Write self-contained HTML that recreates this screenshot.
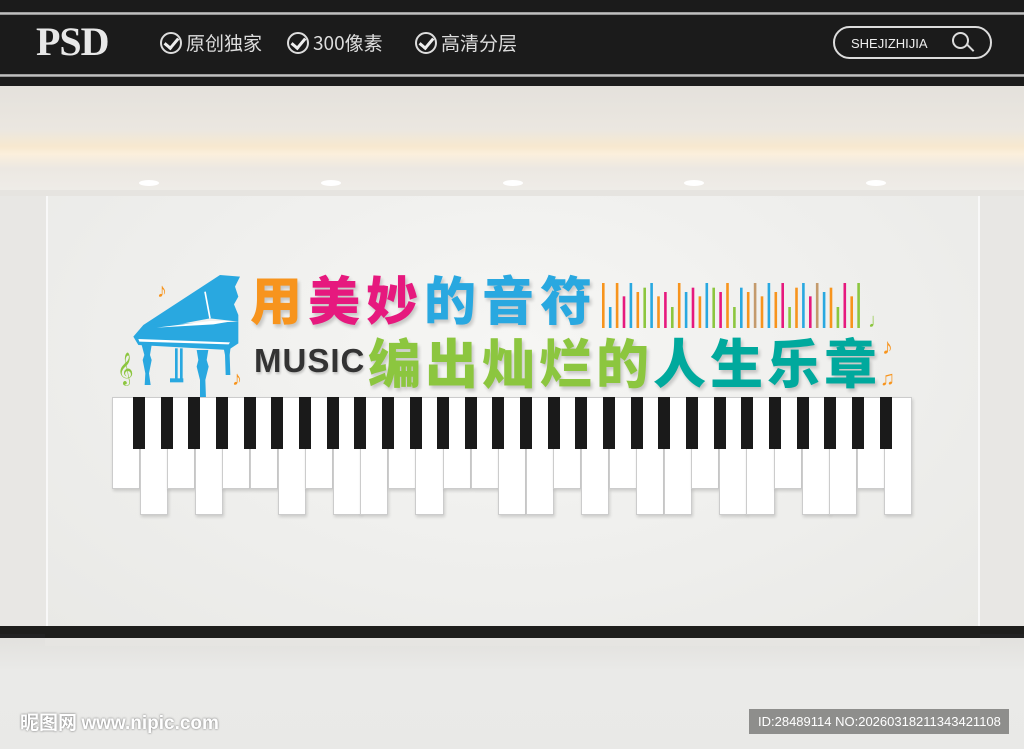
<!DOCTYPE html>
<html><head><meta charset="utf-8"><style>
*{margin:0;padding:0;box-sizing:border-box}
body{width:1024px;height:749px;overflow:hidden;position:relative;font-family:"Liberation Sans","Noto Sans CJK SC",sans-serif;background:#e9e8e5}
.abs{position:absolute}
#hdr{left:0;top:0;width:1024px;height:86px;background:#1b1b1b}
.hl{left:0;width:1024px;height:3px;background:linear-gradient(#888,#ccc,#777)}
.ck{color:#ddd;font-size:19px;top:29px;font-family:"Noto Sans CJK SC",sans-serif;white-space:nowrap}
.ck span{display:inline-block;width:22px;height:22px;border:2px solid #ddd;border-radius:50%;vertical-align:-4px;margin-right:4px;position:relative}
.ck span:after{content:"";position:absolute;left:5px;top:1px;width:6px;height:11px;border:solid #eee;border-width:0 3px 3px 0;transform:rotate(40deg)}
.t1{font-family:"Noto Sans CJK SC",sans-serif;font-weight:900;font-size:52px;line-height:1;top:272px;left:250px;letter-spacing:6px;text-shadow:2px 3px 3px rgba(0,0,0,.18)}
.t2{font-family:"Noto Sans CJK SC",sans-serif;font-weight:900;font-size:53px;line-height:1;top:335px;left:368px;letter-spacing:4px;text-shadow:2px 3px 3px rgba(0,0,0,.18)}
</style></head><body>
<div class="abs" style="left:0;top:86px;width:1024px;height:110px;background:linear-gradient(#e4e1dc 0%,#ebe7e0 40%,#f7e8cf 55%,#fbefdc 62%,#ece8e2 75%,#efede9 100%)"></div>
<div class="abs" style="left:0;top:190px;width:1024px;height:8px;background:#e6e4e0"></div>
<div class="abs" style="left:0;top:196px;width:1024px;height:435px;background:#e8e7e4"></div>
<div class="abs" style="left:46px;top:196px;width:934px;height:432px;background:radial-gradient(ellipse at 50% 35%,#f6f6f4 0%,#eeeeec 60%,#e9e9e6 100%);border-left:2px solid #f8f8f8;border-right:2px solid #f8f8f8"></div>
<div class="abs" style="left:139px;top:180px;width:20px;height:6px;border-radius:50%;background:#fff"></div>
<div class="abs" style="left:321px;top:180px;width:20px;height:6px;border-radius:50%;background:#fff"></div>
<div class="abs" style="left:503px;top:180px;width:20px;height:6px;border-radius:50%;background:#fff"></div>
<div class="abs" style="left:684px;top:180px;width:20px;height:6px;border-radius:50%;background:#fff"></div>
<div class="abs" style="left:866px;top:180px;width:20px;height:6px;border-radius:50%;background:#fff"></div>
<div class="abs" style="left:0;top:626px;width:1024px;height:12px;background:#1e1e1c"></div>
<div class="abs" style="left:0;top:634px;width:45px;height:12px;background:#222"></div>
<div class="abs" style="left:980px;top:634px;width:44px;height:12px;background:#222"></div>
<div class="abs" style="left:0;top:638px;width:1024px;height:111px;background:linear-gradient(#e2e1de,#eaeae8 30%,#e9e9e7)"></div>
<div class="abs" style="left:45px;top:638px;width:935px;height:8px;background:#e6e5e2"></div>
<div id="hdr" class="abs"></div>
<div class="abs hl" style="top:12px"></div>
<div class="abs hl" style="top:74px"></div>
<div class="abs" style="left:36px;top:18px;font-family:'Liberation Serif',serif;font-weight:bold;font-size:40px;color:#e8e8e8;letter-spacing:-1px">PSD</div>
<div class="abs ck" style="left:160px"><span></span>原创独家</div>
<div class="abs ck" style="left:287px"><span></span>300像素</div>
<div class="abs ck" style="left:415px"><span></span>高清分层</div>
<div class="abs" style="left:833px;top:26px;width:159px;height:33px;border:2px solid #ddd;border-radius:17px;color:#eee;font-size:13px;padding:8px 0 0 16px">SHEJIZHIJIA</div>
<div class="abs" style="left:952px;top:32px;width:17px;height:17px;border:2px solid #ddd;border-radius:50%"></div>
<div class="abs" style="left:966px;top:47px;width:9px;height:2px;background:#ddd;transform:rotate(45deg)"></div>
<svg class="abs" style="left:110px;top:265px" width="150" height="135" viewBox="0 0 450 405">
<g fill="#29a8e0">
<polygon points="100,180 330,30 390,35 375,65 385,95 372,118 385,150 385,170 300,160 140,190"/>
<polygon points="70,215 100,180 385,170 385,235 355,255 85,240"/>
<path d="M95,240 h30 l-5,30 l5,15 l-8,40 l5,35 h-18 l2,-35 l-8,-40 l5,-15z"/>
<path d="M260,255 h35 l-5,30 l6,20 l-10,40 l2,55 h-18 l0,-55 l-10,-40 l5,-20z"/>
<path d="M340,245 h22 l-3,25 l2,60 h-14 l-2,-60z"/>
<rect x="195" y="250" width="8" height="95"/><rect x="210" y="250" width="8" height="95"/>
<rect x="180" y="340" width="40" height="12"/>
</g>
<polygon points="140,188 300,168 370,168 310,178" fill="#fff"/>
<line x1="285" y1="80" x2="300" y2="160" stroke="#fff" stroke-width="5"/>
<polygon points="85,222 360,232 356,238 88,230" fill="#fff"/>
</svg>
<div class="abs" style="left:157px;top:280px;color:#f7941d;font-size:20px">♪</div>
<div class="abs" style="left:117px;top:352px;color:#8cc63f;font-size:28px;font-family:'DejaVu Sans',sans-serif">𝄞</div>
<div class="abs" style="left:232px;top:368px;color:#f7941d;font-size:20px">♪</div>
<div class="abs" style="left:868px;top:310px;color:#8cc63f;font-size:20px">♩</div>
<div class="abs" style="left:882px;top:334px;color:#f7941d;font-size:22px">♪</div>
<div class="abs" style="left:880px;top:368px;color:#f7941d;font-size:20px">♫</div>
<div class="abs t1"><span style="color:#f7941d">用</span><span style="color:#e6197e">美妙</span><span style="color:#29a8e0">的音符</span></div>
<div class="abs" style="left:254px;top:342px;font-size:33px;color:#333;font-weight:bold;letter-spacing:1px;text-shadow:1px 2px 2px rgba(0,0,0,.2)">MUSIC</div>
<div class="abs t2"><span style="color:#8cc63f">编出灿烂的</span><span style="color:#00a99d">人生乐章</span></div>
<svg class="abs" style="left:600px;top:280px" width="265" height="50" id="bars"></svg>
<div class="abs" id="keys" style="left:112px;top:397px;width:800px;height:125px"></div>
<div class="abs" style="left:20px;top:708px;color:#fff;font-size:19px;font-weight:bold;text-shadow:0 0 2px #666;font-family:'Noto Sans CJK SC',sans-serif">昵图网 <span style="font-family:'Liberation Sans'">www.nipic.com</span></div>
<div class="abs" style="left:749px;top:709px;width:260px;height:25px;background:#8e8e8c;color:#fff;font-size:13px;padding:5px 0 0 9px;white-space:nowrap">ID:28489114 NO:20260318211343421108</div>
<script>
var h=[38,110,38,78,38,65,52,38,78,65,110,38,65,52,78,38,52,65,38,110,52,65,38,78,38,65,38,110,52,38,78,38,65,52,110,38,78,38];
var c=["#f7941d","#29a8e0","#f7941d","#e6197e","#29a8e0","#f7941d","#8cc63f","#29a8e0","#f7941d","#e6197e","#8cc63f","#f7941d","#29a8e0","#e6197e","#f7941d","#29a8e0","#8cc63f","#e6197e","#f7941d","#8cc63f","#29a8e0","#f7941d","#c49a6c","#f7941d","#29a8e0","#f7941d","#e6197e","#8cc63f","#f7941d","#29a8e0","#e6197e","#c49a6c","#29a8e0","#f7941d","#8cc63f","#e6197e","#f7941d","#8cc63f"];
var s="";for(var i=0;i<h.length;i++){var y=(h[i]-38)/3;s+='<rect x="'+(2+i*6.9)+'" y="'+(3+y)+'" width="2.6" height="'+(45-y)+'" fill="'+c[i]+'"/>';}
document.getElementById("bars").innerHTML=s;
var k="",b=[0,1,0,1,0,0,1,0,1,1,0,1,0,0,1,1,0,1,0,1,1,0,1,1,0,1,1,0,1];
var w=800/29;
for(var i=0;i<29;i++){var hh=b[i]?118:92;k+='<div style="position:absolute;left:'+(i*w)+'px;top:0;width:'+(w+0.5)+'px;height:'+hh+'px;background:#fff;border:1px solid #ccc;box-shadow:1px 2px 3px rgba(0,0,0,.15)"></div>';}
for(var i=0;i<28;i++){k+='<div style="position:absolute;left:'+(21+i*27.65)+'px;top:0;width:12px;height:52px;background:#1a1a1a"></div>';}
document.getElementById("keys").innerHTML=k;
</script>
</body></html>
